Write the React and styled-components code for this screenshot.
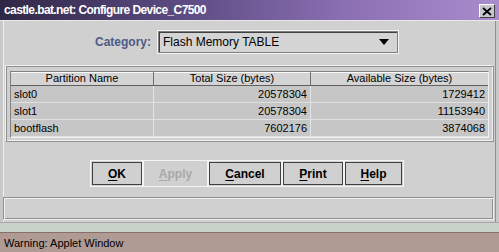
import styled, { createGlobalStyle } from "styled-components";

const Global = createGlobalStyle`
  html, body { margin: 0; padding: 0; background: #d0d0d0; }
  body { font-family: "Liberation Sans", Arial, sans-serif; }
  * { box-sizing: border-box; }
`;

const rows = [
  { name: "slot0", total: "20578304", avail: "1729412" },
  { name: "slot1", total: "20578304", avail: "11153940" },
  { name: "bootflash", total: "7602176", avail: "3874068" },
];

export default function App() {
  return (
    <>
      <Global />
      <Window>
        <TitleBar>
          <Title>castle.bat.net: Configure Device_C7500</Title>
          <CloseBox>
            <svg width="10" height="9" viewBox="0 0 10 9">
              <path d="M1 1 L9 8 M9 1 L1 8" stroke="#000" strokeWidth="1.8" />
            </svg>
          </CloseBox>
        </TitleBar>
        <Body>
          <CategoryRow>
            <CategoryLabel>Category:</CategoryLabel>
            <Select>
              <span>Flash Memory TABLE</span>
              <Arrow />
            </Select>
          </CategoryRow>
          <TablePanel>
            <Table>
              <HeadRow>
                <HeadCell>Partition Name</HeadCell>
                <HeadCell>Total Size (bytes)</HeadCell>
                <HeadCell $last>Available Size (bytes)</HeadCell>
              </HeadRow>
              {rows.map((r) => (
                <Row key={r.name}>
                  <Cell>{r.name}</Cell>
                  <Cell $right>{r.total}</Cell>
                  <Cell $right $last>{r.avail}</Cell>
                </Row>
              ))}
              <Filler />
            </Table>
          </TablePanel>
          <ButtonRow>
            <Button $w={50}><u>O</u>K</Button>
            <Button $w={63} $disabled><u>A</u>pply</Button>
            <Button $w={72}><u>C</u>ancel</Button>
            <Button $w={60}><u>P</u>rint</Button>
            <Button $w={57}><u>H</u>elp</Button>
          </ButtonRow>
          <StatusPanel />
        </Body>
        <Strip />
        <Warning>Warning: Applet Window</Warning>
      </Window>
    </>
  );
}

const Window = styled.div`
  width: 499px;
  height: 252px;
  display: flex;
  flex-direction: column;
  overflow: hidden;
`;

const TitleBar = styled.div`
  height: 21px;
  flex-shrink: 0;
  display: flex;
  align-items: center;
  justify-content: space-between;
  padding: 0 4px 0 4px;
  background: linear-gradient(to right, #2f2746 0%, #5a4a80 35%, #8c70b4 70%, #a88ccc 100%);
  border-bottom: 1px solid #e8e8e8;
`;

const Title = styled.span`
  color: #fff;
  font-weight: bold;
  font-size: 12px;
  letter-spacing: -0.6px;
`;

const CloseBox = styled.div`
  width: 16px;
  height: 14px;
  margin-top: 2px;
  display: flex;
  align-items: center;
  justify-content: center;
  background: #c8c4d0;
  border: 1px solid;
  border-color: #fff #404040 #404040 #fff;
`;

const Body = styled.div`
  flex: 1;
  display: flex;
  flex-direction: column;
  background: #d0d0d0;
  border-left: 3px solid #c8c8c8;
  border-right: 3px solid #c8c8c8;
  box-shadow: inset 1px 0 #f0f0f0, inset -1px 0 #909090;
`;

const CategoryRow = styled.div`
  display: flex;
  align-items: center;
  margin-top: 10px;
  padding-left: 92px;
  gap: 7px;
`;

const CategoryLabel = styled.span`
  font-weight: bold;
  font-size: 12px;
  color: #4e5a86;
`;

const Select = styled.div`
  width: 240px;
  height: 22px;
  display: flex;
  align-items: center;
  justify-content: space-between;
  padding: 0 8px 0 4px;
  background: #d4d4d4;
  border: 1px solid #808080;
  outline: 1px solid #f4f4f4;
  box-shadow: inset 1px 1px #404040;
  font-size: 12px;
  color: #000;
`;

const Arrow = styled.span`
  width: 0;
  height: 0;
  border-left: 5px solid transparent;
  border-right: 5px solid transparent;
  border-top: 6px solid #000;
`;

const TablePanel = styled.div`
  margin: 12px 2px 0 2px;
  height: 77px;
  padding: 5px 4px 3px 4px;
  border: 1px solid;
  border-color: #f0f0f0 #909090 #909090 #f0f0f0;
  box-shadow: inset 1px 1px #909090, inset -1px -1px #f0f0f0;
`;

const Table = styled.div`
  height: 100%;
  display: flex;
  flex-direction: column;
  border: 1px solid;
  border-color: #808080 #f0f0f0 #f0f0f0 #808080;
  background: #d0d0d0;
`;

const HeadRow = styled.div`
  display: grid;
  grid-template-columns: 143px 157px 1fr;
  height: 14px;
  flex-shrink: 0;
  background: #d4d4d4;
  border-bottom: 1px solid #606060;
  box-shadow: inset 0 1px #fafafa;
`;

const HeadCell = styled.div`
  font-size: 11px;
  line-height: 13px;
  text-align: center;
  color: #000;
  border-right: ${(p) => (p.$last ? "none" : "1px solid #707070")};
`;

const Row = styled.div`
  display: grid;
  grid-template-columns: 143px 157px 1fr;
  height: 17px;
  flex-shrink: 0;
  background: #c6c6c6;
  border-bottom: 1px solid #e0e0e0;
`;

const Cell = styled.div`
  font-size: 11px;
  line-height: 16px;
  padding: 0 3px;
  text-align: ${(p) => (p.$right ? "right" : "left")};
  color: #000;
  border-right: ${(p) => (p.$last ? "none" : "1px solid #e4e4e4")};
`;

const Filler = styled.div`
  flex: 1;
`;

const ButtonRow = styled.div`
  display: flex;
  margin-top: 20px;
  padding-left: 89px;
  gap: 2px;
`;

const Button = styled.div`
  width: ${(p) => p.$w}px;
  height: 23px;
  display: flex;
  align-items: center;
  justify-content: center;
  font-weight: bold;
  font-size: 12px;
  color: ${(p) => (p.$disabled ? "#a8a8a8" : "#000")};
  background: #d0d0d0;
  border: 1px solid;
  border-color: ${(p) => (p.$disabled ? "#d0d0d0" : "#404040")};
  outline: 1px solid #f4f4f4;
  outline-offset: 1px;
  u { text-decoration-thickness: 1px; text-underline-offset: 2px; }
`;

const StatusPanel = styled.div`
  margin: 12px 2px 0 0;
  height: 23px;
  border: 1px solid;
  border-color: #909090 #f0f0f0 #f0f0f0 #909090;
  box-shadow: inset 1px 1px #f0f0f0, inset -1px -1px #909090;
`;

const Strip = styled.div`
  height: 10px;
  flex-shrink: 0;
  background: #c8d2c8;
  border-top: 1px solid #a8a8a8;
`;

const Warning = styled.div`
  height: 20px;
  flex-shrink: 0;
  display: flex;
  align-items: center;
  padding-left: 4px;
  background: #b09a94;
  border-top: 1px solid #887068;
  font-size: 11px;
  color: #000;
`;
